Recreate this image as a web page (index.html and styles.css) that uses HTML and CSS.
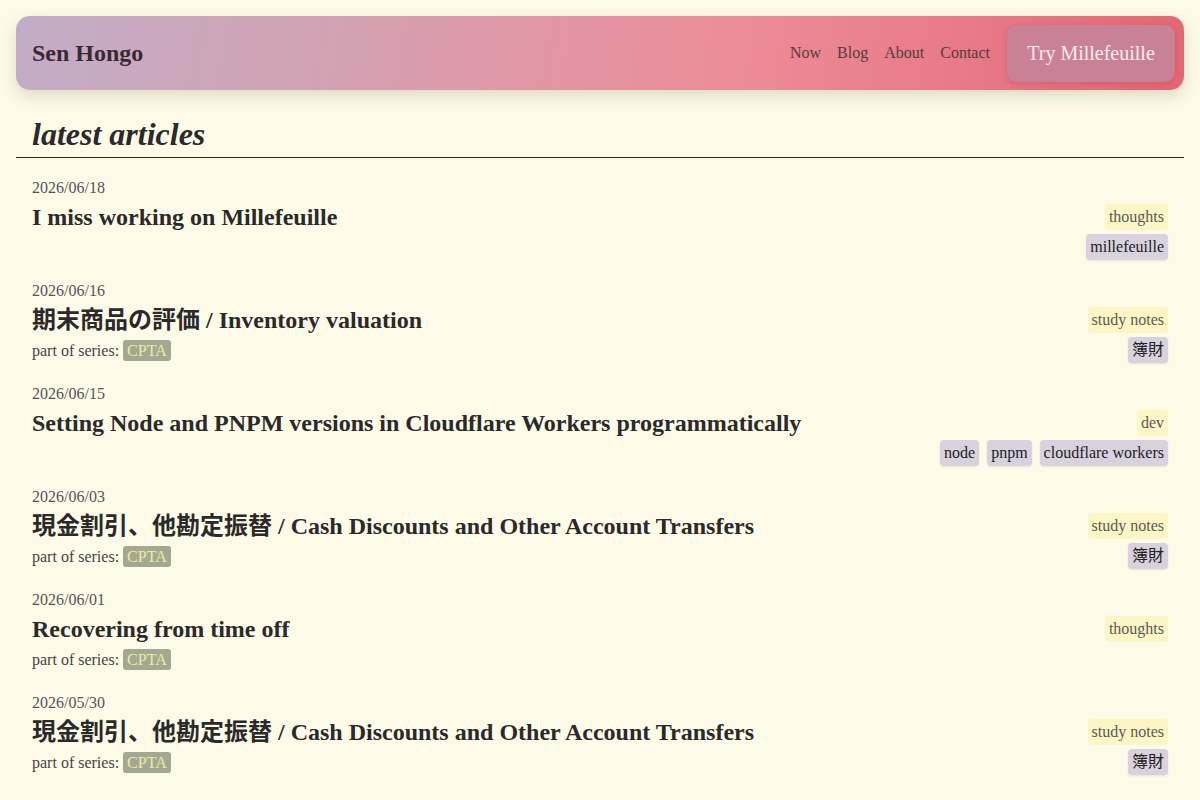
FILE: index.html
```html
<!DOCTYPE html>
<html lang="en">
<head>
<meta charset="utf-8">
<title>Sen Hongo</title>
<link rel="stylesheet" href="styles.css">
</head>
<body>
<header class="site-header">
  <a class="brand" href="#">Sen Hongo</a>
  <nav class="nav">
    <a href="#">Now</a>
    <a href="#">Blog</a>
    <a href="#">About</a>
    <a href="#">Contact</a>
  </nav>
  <a class="cta" href="#">Try Millefeuille</a>
</header>

<main class="content">
  <h1 class="section-title">latest articles</h1>
  <ul class="articles">
    <li class="article">
      <div class="date">2026/06/18</div>
      <div class="article-body">
        <div class="article-main">
          <h2 class="article-title">I miss working on Millefeuille</h2>
        </div>
        <div class="article-tags">
          <span class="category">thoughts</span>
          <div class="tag-row"><span class="tag">millefeuille</span></div>
        </div>
      </div>
    </li>
    <li class="article">
      <div class="date">2026/06/16</div>
      <div class="article-body">
        <div class="article-main">
          <h2 class="article-title">期末商品の評価 / Inventory valuation</h2>
          <p class="series">part of series: <span class="series-badge">CPTA</span></p>
        </div>
        <div class="article-tags">
          <span class="category">study notes</span>
          <div class="tag-row"><span class="tag">簿財</span></div>
        </div>
      </div>
    </li>
    <li class="article">
      <div class="date">2026/06/15</div>
      <div class="article-body">
        <div class="article-main">
          <h2 class="article-title">Setting Node and PNPM versions in Cloudflare Workers programmatically</h2>
        </div>
        <div class="article-tags">
          <span class="category">dev</span>
          <div class="tag-row"><span class="tag">node</span><span class="tag">pnpm</span><span class="tag">cloudflare workers</span></div>
        </div>
      </div>
    </li>
    <li class="article">
      <div class="date">2026/06/03</div>
      <div class="article-body">
        <div class="article-main">
          <h2 class="article-title">現金割引、他勘定振替 / Cash Discounts and Other Account Transfers</h2>
          <p class="series">part of series: <span class="series-badge">CPTA</span></p>
        </div>
        <div class="article-tags">
          <span class="category">study notes</span>
          <div class="tag-row"><span class="tag">簿財</span></div>
        </div>
      </div>
    </li>
    <li class="article">
      <div class="date">2026/06/01</div>
      <div class="article-body">
        <div class="article-main">
          <h2 class="article-title">Recovering from time off</h2>
          <p class="series">part of series: <span class="series-badge">CPTA</span></p>
        </div>
        <div class="article-tags">
          <span class="category">thoughts</span>
        </div>
      </div>
    </li>
    <li class="article">
      <div class="date">2026/05/30</div>
      <div class="article-body">
        <div class="article-main">
          <h2 class="article-title">現金割引、他勘定振替 / Cash Discounts and Other Account Transfers</h2>
          <p class="series">part of series: <span class="series-badge">CPTA</span></p>
        </div>
        <div class="article-tags">
          <span class="category">study notes</span>
          <div class="tag-row"><span class="tag">簿財</span></div>
        </div>
      </div>
    </li>
  </ul>
</main>
</body>
</html>
```

FILE: styles.css
```css
* {
  box-sizing: border-box;
}

html, body {
  margin: 0;
  background: #fefae8;
}

body {
  padding: 16px;
  font-family: "Liberation Serif", "Noto Sans CJK JP", serif;
  font-size: 16px;
  color: #2a2a2a;
}

a {
  text-decoration: none;
  color: inherit;
}

/* top bar */
.site-header {
  display: flex;
  align-items: center;
  height: 74px;
  padding: 0 9px 0 16px;
  border-radius: 14px;
  background: linear-gradient(100deg, #c2adc6 0%, #d1a3b5 25%, #e196a4 45%, #ec8c98 62%, #e87887 82%, #e4676f 100%);
  box-shadow: 0 6px 16px rgba(90, 90, 50, 0.2);
}

.brand {
  font-size: 24px;
  font-weight: bold;
  color: #3a2a30;
}

.nav {
  margin-left: auto;
  display: flex;
  gap: 16px;
  font-size: 16px;
  color: #5a3a40;
}

.cta {
  margin-left: 17px;
  height: 57px;
  width: 168px;
  display: flex;
  align-items: center;
  justify-content: center;
  font-size: 20px;
  color: #fbeef0;
  background: #c88196;
  border-radius: 10px;
  box-shadow: 0 2px 6px rgba(120, 40, 60, 0.2);
}

/* article list */
.section-title {
  margin: 24px 0 0;
  padding: 0 16px 3px;
  font-size: 32px;
  line-height: 40px;
  font-style: italic;
  font-weight: bold;
  border-bottom: 1px solid #2a2a2a;
}

.articles {
  list-style: none;
  margin: 0;
  padding: 18px 16px 0;
  display: flex;
  flex-direction: column;
  gap: 19px;
}

.date {
  line-height: 24px;
  color: #555;
  margin-bottom: 2px;
}

.article-body {
  display: flex;
  justify-content: space-between;
  align-items: flex-start;
  gap: 16px;
}

.article-title {
  margin: 0;
  font-size: 24px;
  line-height: 30px;
  font-weight: bold;
}

/* series line sits 2px low but keeps a 28px footprint */
.series {
  margin: 0 0 -2px;
  padding-top: 2px;
  line-height: 28px;
  color: #444;
}

.series-badge {
  display: inline-block;
  padding: 0 4px;
  line-height: 21px;
  border-radius: 3px;
  background: #a4a890;
  color: #efeba0;
}

.article-tags {
  flex: none;
  display: flex;
  flex-direction: column;
  align-items: flex-end;
  gap: 4px;
  padding-top: 2px;
}

.tag-row {
  display: flex;
  gap: 8px;
}

.category,
.tag {
  display: inline-block;
  padding: 0 4px;
  line-height: 26px;
  border-radius: 4px;
}

.category {
  background: #fbf6c4;
  color: #5a5a5a;
}

.tag {
  background: #d9d1de;
  color: #222;
  box-shadow: 0 1px 2px rgba(80, 60, 90, 0.12);
}
```
